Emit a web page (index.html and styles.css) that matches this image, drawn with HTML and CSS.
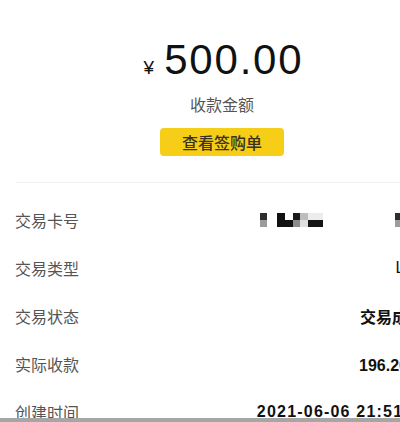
FILE: index.html
```html
<!DOCTYPE html>
<html lang="zh-CN">
<head>
<meta charset="utf-8">
<title>交易详情</title>
<link rel="stylesheet" href="styles.css">
</head>
<body>
<div class="page">
  <div class="summary">
    <div class="amount"><span class="currency">¥</span><span class="num">500.00</span></div>
    <div class="amount-label">收款金额</div>
    <button class="receipt-btn" type="button">查看签购单</button>
  </div>
  <div class="divider"></div>
  <div class="list">
    <div class="row">
      <span class="label">交易卡号</span>
      <span class="value">
        <svg class="mosaic" width="164" height="14" viewBox="0 0 164 14">
          <rect x="0" y="0" width="7" height="7" fill="#2e2e2e"/>
          <rect x="0" y="7" width="7" height="7" fill="#9c9c9c"/>
          <rect x="17" y="0" width="8" height="14" fill="#111"/>
          <rect x="25" y="7" width="8" height="7" fill="#111"/>
          <rect x="33" y="0" width="7" height="7" fill="#1a1a1a"/>
          <rect x="33" y="7" width="7" height="7" fill="#8a8a8a"/>
          <rect x="40" y="0" width="8" height="7" fill="#bdbdbd"/>
          <rect x="40" y="7" width="8" height="7" fill="#dedede"/>
          <rect x="48" y="0" width="15" height="7" fill="#ececec"/>
          <rect x="48" y="7" width="15" height="7" fill="#141414"/>
          <rect x="135" y="0" width="7" height="7" fill="#2e2e2e"/>
          <rect x="135" y="7" width="7" height="7" fill="#9c9c9c"/>
        </svg>
      </span>
    </div>
    <div class="row">
      <span class="label">交易类型</span>
      <span class="value regular">LKL</span>
    </div>
    <div class="row">
      <span class="label">交易状态</span>
      <span class="value">交易成功</span>
    </div>
    <div class="row">
      <span class="label">实际收款</span>
      <span class="value">196.20元</span>
    </div>
    <div class="row">
      <span class="label">创建时间</span>
      <span class="value date">2021-06-06 21:51:36</span>
    </div>
  </div>
</div>
<div class="bottom-bar"></div>
</body>
</html>
```

FILE: styles.css
```css
html, body {
  margin: 0;
  padding: 0;
  background: #ffffff;
  overflow: hidden;
}

body {
  width: 444px;
  height: 422px;
  font-family: "Liberation Sans", "Noto Sans CJK SC", sans-serif;
  color: #111;
}

.page {
  width: 444px;
  height: 422px;
  overflow: hidden;
}

.summary {
  display: flex;
  flex-direction: column;
  align-items: center;
  padding-top: 36px;
}

.amount {
  display: flex;
  align-items: baseline;
  line-height: 48px;
  height: 48px;
  padding-left: 3px;
}

.currency {
  font-size: 19px;
  margin-right: 10px;
  color: #111;
}

.num {
  font-size: 42px;
  letter-spacing: 1.8px;
  color: #111;
}

.amount-label {
  margin-top: 9px;
  font-family: "Noto Sans CJK SC", sans-serif;
  font-size: 16px;
  line-height: 22px;
  color: #555;
}

.receipt-btn {
  margin-top: 13px;
  width: 124px;
  height: 28px;
  border: none;
  border-radius: 4px;
  background: #f6cd17;
  font-family: "Noto Sans CJK SC", sans-serif;
  font-size: 16px;
  font-weight: 500;
  color: #3a3320;
  padding: 0;
  line-height: 28px;
}

.divider {
  margin: 26px 0 0 16px;
  height: 1px;
  background: #f1f1f1;
}

.list {
  width: 424px;
  padding-top: 13px;
  padding-left: 15px;
  box-sizing: border-box;
}

.row {
  display: flex;
  justify-content: space-between;
  align-items: center;
  height: 48px;
}

.label {
  font-family: "Noto Sans CJK SC", sans-serif;
  font-size: 16px;
  color: #555;
}

.value {
  font-size: 16px;
  font-weight: bold;
  color: #111;
  white-space: nowrap;
  display: flex;
  align-items: center;
}

.value.regular {
  font-weight: normal;
}

.value.date {
  letter-spacing: 1.2px;
  margin-right: -6px;
}

.mosaic {
  display: block;
}

.bottom-bar {
  position: fixed;
  left: 0;
  right: 0;
  bottom: 0;
  height: 4px;
  background: #a6a6a6;
}
```
